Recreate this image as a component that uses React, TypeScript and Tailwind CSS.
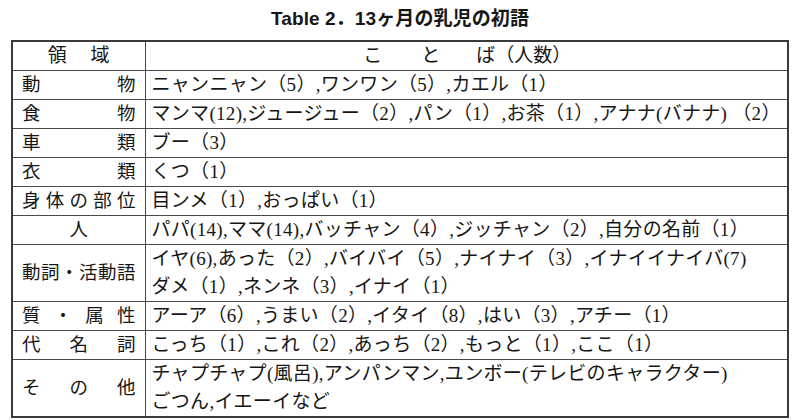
import React from 'react';

const rows: { label: string; mode: 'justify' | 'center'; lines: string[]; h: string }[] = [
  { label: '動物', mode: 'justify', lines: ['ニャンニャン（5）,ワンワン（5）,カエル（1）'], h: 'h-[28px]' },
  { label: '食物', mode: 'justify', lines: ['マンマ(12),ジュージュー（2）,パン（1）,お茶（1）,アナナ(バナナ) （2）'], h: 'h-[29px]' },
  { label: '車類', mode: 'justify', lines: ['ブー（3）'], h: 'h-[28px]' },
  { label: '衣類', mode: 'justify', lines: ['くつ（1）'], h: 'h-[28px]' },
  { label: '身体の部位', mode: 'justify', lines: ['目ンメ（1）,おっぱい（1）'], h: 'h-[28px]' },
  { label: '人', mode: 'center', lines: ['パパ(14),ママ(14),バッチャン（4）,ジッチャン（2）,自分の名前（1）'], h: 'h-[28px]' },
  { label: '動詞・活動語', mode: 'justify', lines: ['イヤ(6),あった（2）,バイバイ（5）,ナイナイ（3）,イナイイナイバ(7)', 'ダメ（1）,ネンネ（3）,イナイ（1）'], h: 'h-[57px]' },
  { label: '質・属性', mode: 'justify', lines: ['アーア（6）,うまい（2）,イタイ（8）,はい（3）,アチー（1）'], h: 'h-[28px]' },
  { label: '代名詞', mode: 'justify', lines: ['こっち（1）,これ（2）,あっち（2）,もっと（1）,ここ（1）'], h: 'h-[29px]' },
  { label: 'その他', mode: 'justify', lines: ['チャプチャプ(風呂),アンパンマン,ユンボー(テレビのキャラクター)', 'ごつん,イエーイなど'], h: 'h-[56px]' },
];

export default function App() {
  return (
    <div
      className="w-[800px] h-[420px] bg-white text-[#161616] overflow-hidden"
      style={{ fontFamily: '"Liberation Serif", "Noto Sans CJK JP", serif' }}
    >
      {/* Title */}
      <div className="h-[40px] flex items-center justify-center pb-[1px]">
        <h1
          className="text-[19px] font-bold tracking-[0.1px]"
          style={{ fontFamily: '"Liberation Sans", "Noto Sans CJK JP", sans-serif' }}
        >
          Table 2．13ヶ月の乳児の初語
        </h1>
      </div>

      <table className="ml-[11px] w-[778px] table-fixed border-collapse border-2 border-[#3a3a3a] text-[19px] leading-[28px]">
        <colgroup>
          <col className="w-[133px]" />
          <col />
        </colgroup>
        <tbody>
          <tr className="h-[29px]">
            <td className="border border-[#4a4a4a] p-0 text-center">領　 域</td>
            <td className="border border-[#4a4a4a] p-0">
              <div className="flex justify-center items-center pl-[2px]">
                <span>こ</span>
                <span className="ml-[39px]">と</span>
                <span className="ml-[36px]">ば（人数）</span>
              </div>
            </td>
          </tr>
          {rows.map((row) => (
            <tr key={row.label} className={row.h}>
              <td
                className={`border border-[#4a4a4a] py-0 px-[9px] text-[18.5px] whitespace-nowrap ${
                  row.mode === 'center' ? 'text-center' : 'text-justify [text-align-last:justify]'
                }`}
              >
                {row.label}
              </td>
              <td className="border border-[#4a4a4a] py-0 pl-[6px] pr-0 align-middle tracking-[0.3px]">
                {row.lines.map((line) => (
                  <div key={line} className="whitespace-nowrap">{line}</div>
                ))}
              </td>
            </tr>
          ))}
        </tbody>
      </table>
    </div>
  );
}
